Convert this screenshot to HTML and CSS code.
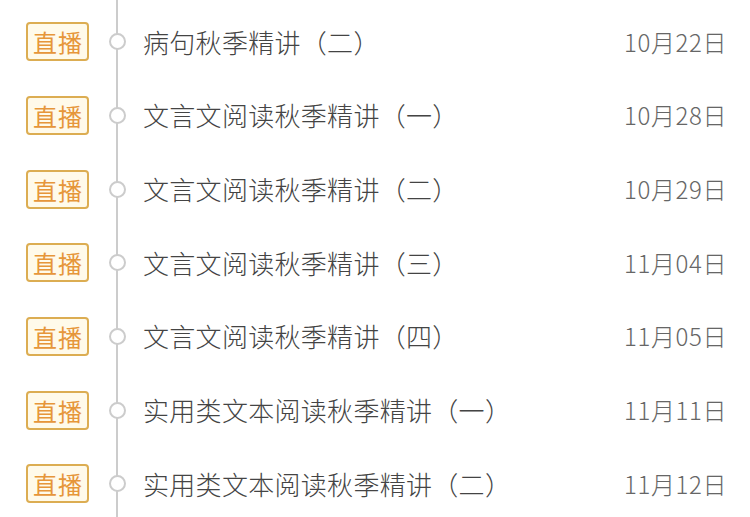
FILE: index.html
```html
<!DOCTYPE html>
<html lang="zh">
<head>
<meta charset="utf-8">
<link rel="stylesheet" href="styles.css">
</head>
<body>
<ul class="list">
  <li class="row"><span class="badge">直播</span><span class="node"><span class="dot"></span></span><span class="title">病句秋季精讲（二）</span><span class="date">10月22日</span></li>
  <li class="row"><span class="badge">直播</span><span class="node"><span class="dot"></span></span><span class="title">文言文阅读秋季精讲（一）</span><span class="date">10月28日</span></li>
  <li class="row"><span class="badge">直播</span><span class="node"><span class="dot"></span></span><span class="title">文言文阅读秋季精讲（二）</span><span class="date">10月29日</span></li>
  <li class="row"><span class="badge">直播</span><span class="node"><span class="dot"></span></span><span class="title">文言文阅读秋季精讲（三）</span><span class="date">11月04日</span></li>
  <li class="row"><span class="badge">直播</span><span class="node"><span class="dot"></span></span><span class="title">文言文阅读秋季精讲（四）</span><span class="date">11月05日</span></li>
  <li class="row"><span class="badge">直播</span><span class="node"><span class="dot"></span></span><span class="title">实用类文本阅读秋季精讲（一）</span><span class="date">11月11日</span></li>
  <li class="row"><span class="badge">直播</span><span class="node"><span class="dot"></span></span><span class="title">实用类文本阅读秋季精讲（二）</span><span class="date">11月12日</span></li>
</ul>
</body>
</html>
```
FILE: styles.css
```css
html, body {
  margin: 0;
  padding: 0;
  background: #ffffff;
}
body {
  width: 750px;
  height: 517px;
  overflow: hidden;
  font-family: "Noto Sans CJK SC", "Noto Sans", sans-serif;
}
.list {
  list-style: none;
  margin: 0;
  padding: 5px 0 0 0;
  height: 512px;
  background-image: linear-gradient(#cccccc, #cccccc);
  background-repeat: no-repeat;
  background-position: 116px 0;
  background-size: 2px 100%;
}
.row {
  display: flex;
  align-items: center;
  height: 73.67px;
  padding: 0 23px 0 26px;
}
.badge {
  box-sizing: border-box;
  width: 63px;
  height: 39px;
  border: 2px solid #dcad52;
  border-radius: 4px;
  background: #fffaea;
  color: #e6963a;
  font-size: 24px;
  font-weight: 400;
  line-height: 35px;
  text-align: center;
  letter-spacing: 1px;
  padding-left: 1px;
}
.node {
  width: 28px;
  margin-left: 14px;
  display: flex;
  justify-content: center;
  align-items: center;
}
.dot {
  box-sizing: border-box;
  width: 17px;
  height: 17px;
  border: 2px solid #cccccc;
  border-radius: 50%;
  background: #ffffff;
}
.title {
  margin-left: 12px;
  flex: 1;
  font-size: 26px;
  font-weight: 300;
  letter-spacing: 0.3px;
  color: #444444;
  line-height: 1;
}
.date {
  font-size: 24px;
  font-weight: 300;
  letter-spacing: 0.6px;
  color: #666666;
  line-height: 1;
}
```
